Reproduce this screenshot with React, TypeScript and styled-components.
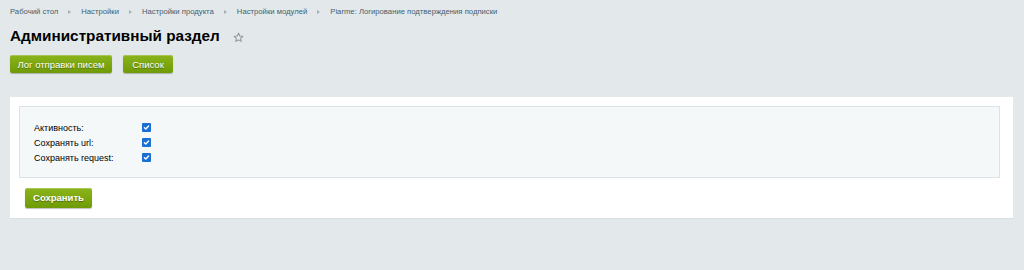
import React from 'react';
import styled, { createGlobalStyle } from 'styled-components';

const GlobalStyle = createGlobalStyle`
    html, body {
        margin: 0;
        padding: 0;
        background: #e3e9eb;
        font-family: "Liberation Sans", Arial, sans-serif;
    }
`;

const Page = styled.div`
    padding: 6px 11px 0 10px;
    min-height: 270px;
    box-sizing: border-box;
`;

const Breadcrumbs = styled.nav`
    display: flex;
    align-items: center;
    height: 11px;
    font-size: 7.7px;
    color: #445d6e;
`;

const Crumb = styled.span`
    white-space: nowrap;
`;

const CrumbArrow = styled.span`
    width: 0;
    height: 0;
    margin: 0 10px 0 10px;
    border-top: 2.5px solid transparent;
    border-bottom: 2.5px solid transparent;
    border-left: 3px solid #a2b0b8;
`;

const TitleRow = styled.div`
    display: flex;
    align-items: center;
    margin-top: 9px;
    height: 20px;
`;

const Title = styled.h1`
    margin: 0;
    font-size: 15.3px;
    font-weight: bold;
    color: #000;
`;

const Star = styled.span`
    margin-left: 13px;
    margin-top: 2px;
    display: flex;
`;

const Toolbar = styled.div`
    display: flex;
    gap: 11px;
    margin-top: 9px;
`;

const GreenButton = styled.button<{ $w: number; $h: number; $bold?: boolean }>`
    width: ${p => p.$w}px;
    height: ${p => p.$h}px;
    padding: 0;
    border: none;
    border-radius: 2px;
    background: linear-gradient(#8bb41b, #6f9b06);
    box-shadow: 0 1px 1px rgba(0, 0, 0, 0.25), inset 0 1px 0 rgba(255, 255, 255, 0.25);
    color: #fff;
    font-family: "Liberation Sans", Arial, sans-serif;
    font-size: 9.5px;
    font-weight: ${p => (p.$bold ? 'bold' : 'normal')};
    text-shadow: 0 1px 1px rgba(0, 0, 0, 0.35);
    cursor: pointer;
`;

const Panel = styled.section`
    margin-top: 24px;
    width: 1003px;
    background: #fff;
    border-bottom: 1px solid #d7dfe3;
    padding: 9px 13px 10px 9px;
    box-sizing: border-box;
`;

const Fields = styled.div`
    border: 1px solid #dae3e8;
    background: #f4f8f9;
    height: 72px;
    padding: 13px 0 0 14px;
    box-sizing: border-box;
`;

const FieldRow = styled.label`
    display: grid;
    grid-template-columns: 108px auto;
    align-items: center;
    height: 15px;
    font-size: 9px;
    color: #000;
`;

const Check = styled.span`
    width: 9px;
    height: 9px;
    border-radius: 1px;
    background: #1a6fd4;
    display: flex;
    align-items: center;
    justify-content: center;
`;

const Footer = styled.div`
    padding: 9px 0 0 6px;
`;

const fields = ['Активность:', 'Сохранять url:', 'Сохранять request:'];
const crumbs = ['Рабочий стол', 'Настройки', 'Настройки продукта', 'Настройки модулей', 'Piarme: Логирование подтверждения подписки'];

const App: React.FC = () => {
    return (
        <>
            <GlobalStyle/>
            <Page>
                <Breadcrumbs>
                    {crumbs.map((c, i) => (
                        <React.Fragment key={c}>
                            {i > 0 && <CrumbArrow/>}
                            <Crumb>{c}</Crumb>
                        </React.Fragment>
                    ))}
                </Breadcrumbs>
                <TitleRow>
                    <Title>Административный раздел</Title>
                    <Star>
                        <svg width="11" height="11" viewBox="0 0 24 24" fill="none" stroke="#8a969c" strokeWidth="2.2" strokeLinejoin="round">
                            <path d="M12 2.5l2.9 6.2 6.6.7-4.9 4.5 1.4 6.6L12 17.2l-6 3.3 1.4-6.6-4.9-4.5 6.6-.7z"/>
                        </svg>
                    </Star>
                </TitleRow>
                <Toolbar>
                    <GreenButton $w={102} $h={18}>Лог отправки писем</GreenButton>
                    <GreenButton $w={50} $h={18}>Список</GreenButton>
                </Toolbar>
                <Panel>
                    <Fields>
                        {fields.map(f => (
                            <FieldRow key={f}>
                                <span>{f}</span>
                                <Check>
                                    <svg width="7" height="7" viewBox="0 0 10 10" fill="none" stroke="#fff" strokeWidth="2" strokeLinecap="round" strokeLinejoin="round">
                                        <path d="M2 5.2l2 2L8 2.8"/>
                                    </svg>
                                </Check>
                            </FieldRow>
                        ))}
                    </Fields>
                    <Footer>
                        <GreenButton $w={67} $h={20} $bold>Сохранить</GreenButton>
                    </Footer>
                </Panel>
            </Page>
        </>
    );
};

export default App;
